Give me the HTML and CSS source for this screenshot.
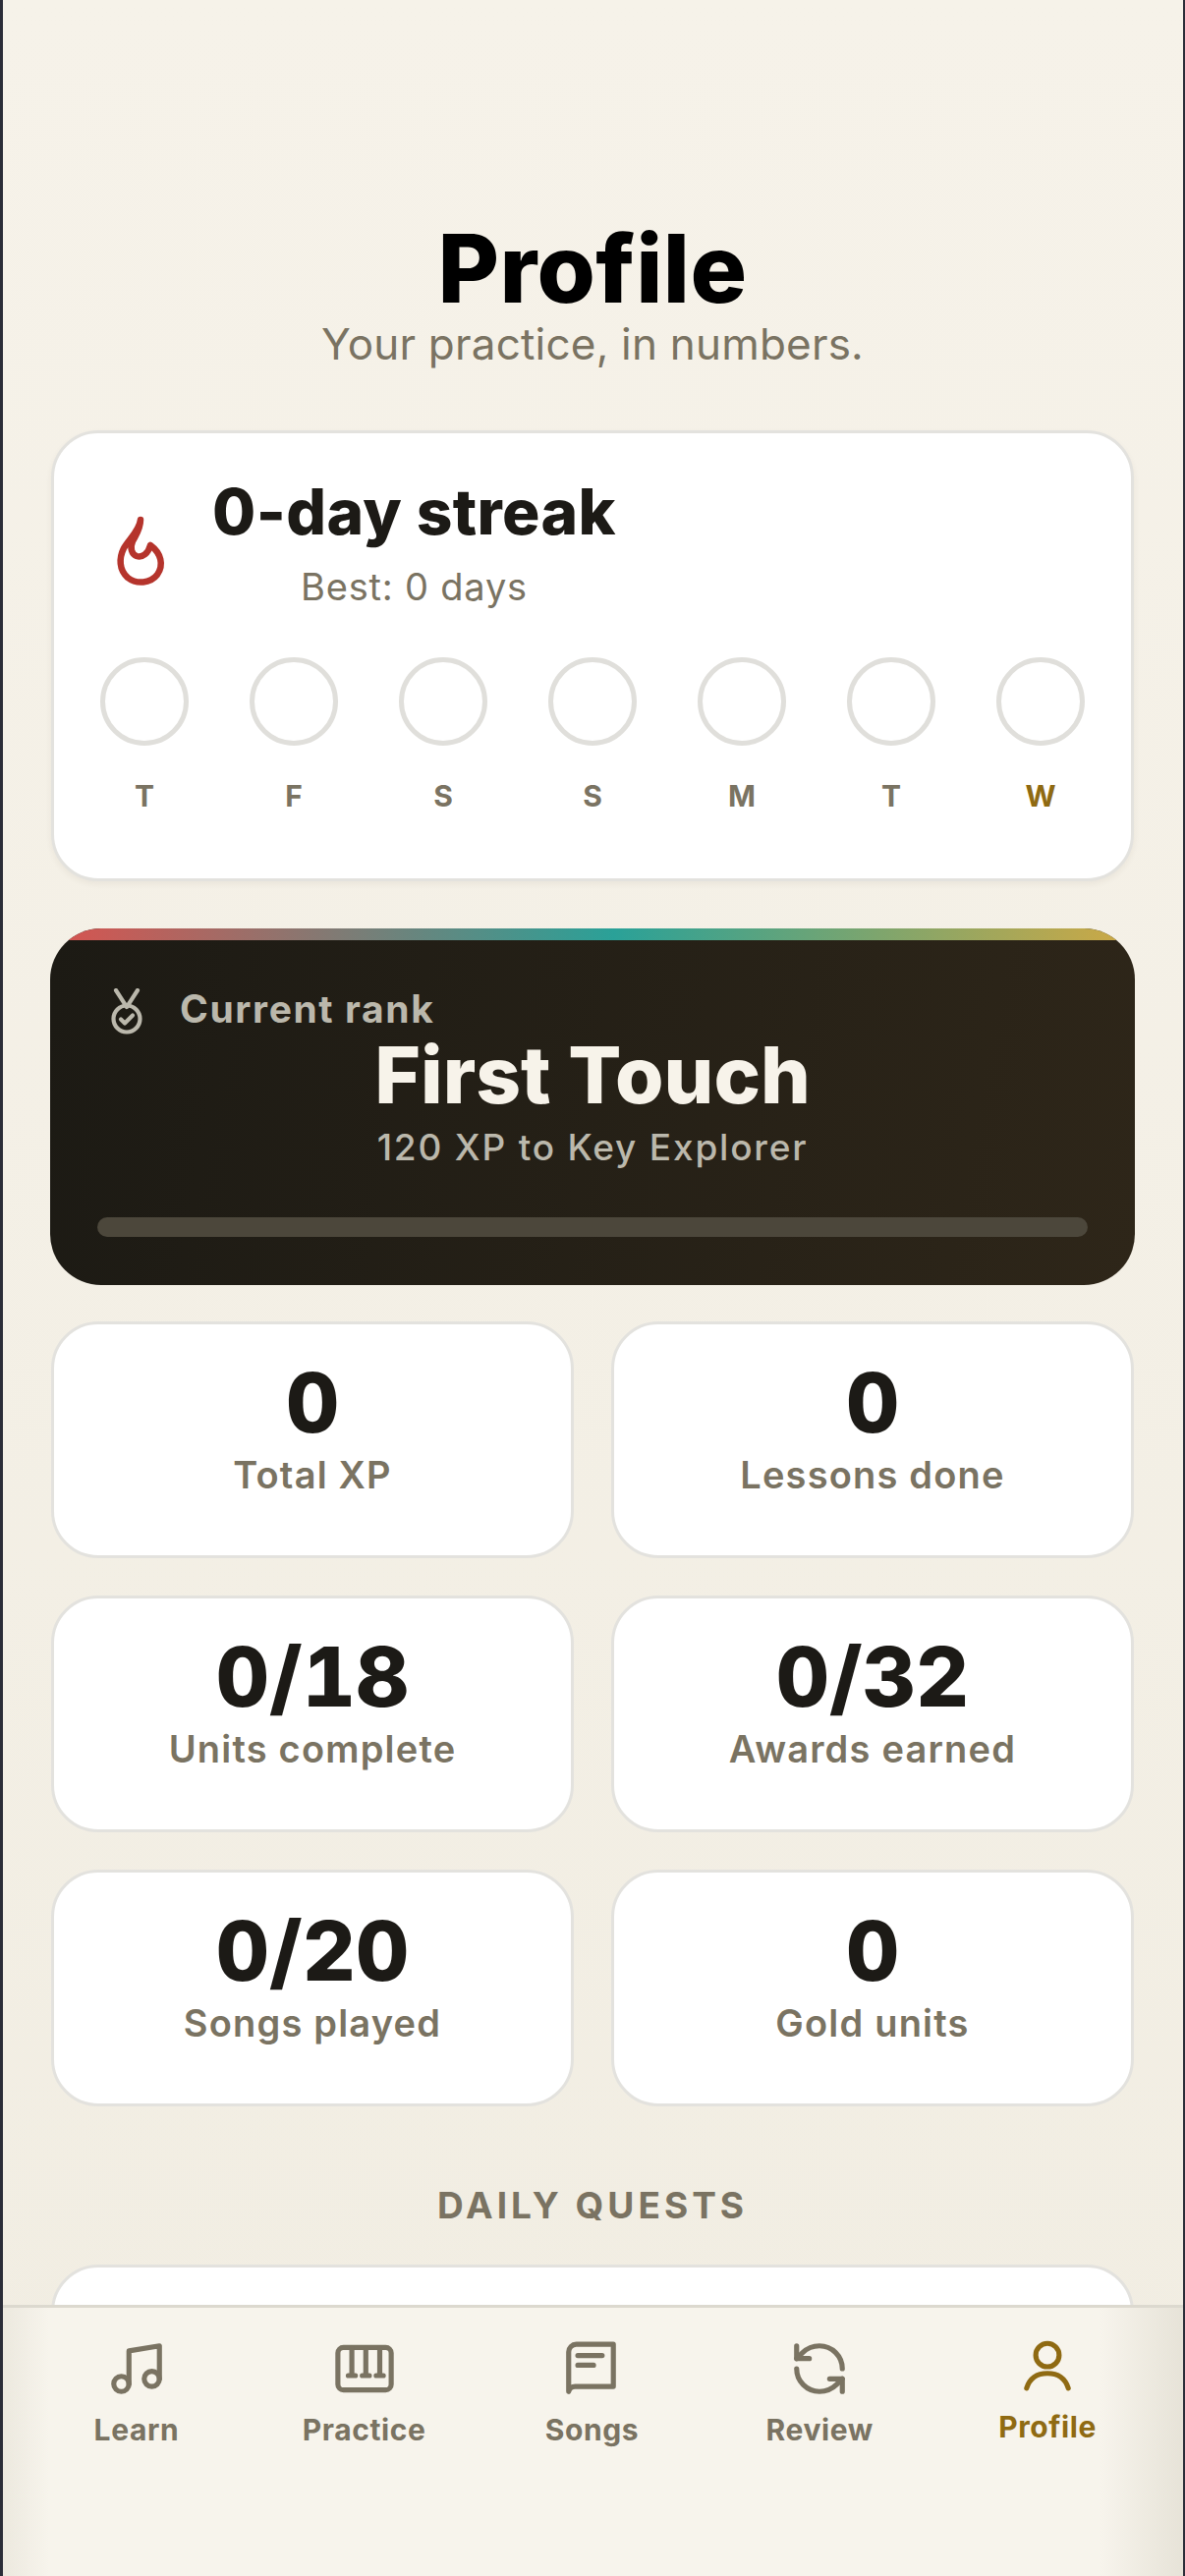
FILE: index.html
```html
<!DOCTYPE html>
<html lang="en">
<head>
  <meta charset="UTF-8">
  <meta name="viewport" content="width=device-width, initial-scale=1.0">
  <title>Profile</title>
  <link rel="stylesheet" href="styles.css">
</head>
<body>
  <div class="screen">
    <div class="content">
      <header class="page-head">
        <h1>Profile</h1>
        <p>Your practice, in numbers.</p>
      </header>

      <section class="card streak">
        <div class="streak-top">
          <svg class="flame" viewBox="114 523 60 80" fill="none" stroke="#b5342c" stroke-width="6.5" stroke-linecap="round" stroke-linejoin="round">
            <path d="M144 531C143 542 132 551 127 560C122 570 122 582 131 590C140 597 154 596 161 587C168 577 165 565 154 557C152 565 146 570 140 568C135 566 133 560 136 553C139 547 144 541 144 531Z"/>
          </svg>
          <div class="streak-text">
            <h2>0-day streak</h2>
            <p>Best: 0 days</p>
          </div>
        </div>
        <div class="week">
          <div class="day"><span class="ring"></span><span class="day-name">T</span></div>
          <div class="day"><span class="ring"></span><span class="day-name">F</span></div>
          <div class="day"><span class="ring"></span><span class="day-name">S</span></div>
          <div class="day"><span class="ring"></span><span class="day-name">S</span></div>
          <div class="day"><span class="ring"></span><span class="day-name">M</span></div>
          <div class="day"><span class="ring"></span><span class="day-name">T</span></div>
          <div class="day today"><span class="ring"></span><span class="day-name">W</span></div>
        </div>
      </section>

      <section class="rank">
        <div class="rank-strip"></div>
        <div class="rank-body">
          <div class="rank-label">
            <svg class="medal" viewBox="0 0 40 52" fill="none" stroke="#bbb8ac" stroke-width="4.2" stroke-linecap="round" stroke-linejoin="round">
              <path d="M9 2L20 19L31 2"/>
              <circle cx="20" cy="31" r="13.5"/>
              <path d="M14 31.5L18 35.5L26 27.5"/>
            </svg>
            <span>Current rank</span>
          </div>
          <h2>First Touch</h2>
          <p>120 XP to Key Explorer</p>
          <div class="rank-bar"></div>
        </div>
      </section>

      <section class="stats">
        <div class="card stat"><strong>0</strong><span>Total XP</span></div>
        <div class="card stat"><strong>0</strong><span>Lessons done</span></div>
        <div class="card stat"><strong>0/18</strong><span>Units complete</span></div>
        <div class="card stat"><strong>0/32</strong><span>Awards earned</span></div>
        <div class="card stat"><strong>0/20</strong><span>Songs played</span></div>
        <div class="card stat"><strong>0</strong><span>Gold units</span></div>
      </section>

      <h3 class="section-title">DAILY QUESTS</h3>
      <section class="card quests"></section>
    </div>

    <nav class="tabbar">
      <a class="tab">
        <svg viewBox="0 0 24 24"><path d="M9 18V5l12-2v13"/><circle cx="6" cy="18" r="3"/><circle cx="18" cy="16" r="3"/></svg>
        <span>Learn</span>
      </a>
      <a class="tab">
        <svg viewBox="0 0 24 24"><rect x="1.5" y="3.6" width="21" height="16.8" rx="2.2"/><path d="M7 4v10.5M12.5 4v10.5M18 4v10.5M5.6 14.7h2.8M11.1 14.7h2.8M16.6 14.7h2.8"/></svg>
        <span>Practice</span>
      </a>
      <a class="tab">
        <svg viewBox="0 0 24 24"><path d="M3 21V5.4a3 3 0 0 1 3-3h14.6V19H5.6A2.6 2.6 0 0 0 3 21z"/><path d="M6.6 6.8h9.6M6.6 10.6h6.2"/></svg>
        <span>Songs</span>
      </a>
      <a class="tab">
        <svg viewBox="0 0 24 24"><path d="M21 12a9 9 0 0 0-9-9 9.75 9.75 0 0 0-6.74 2.74L3 8"/><path d="M3 3v5h5"/><path d="M3 12a9 9 0 0 0 9 9 9.75 9.75 0 0 0 6.74-2.74L21 16"/><path d="M16 16h5v5"/></svg>
        <span>Review</span>
      </a>
      <a class="tab active">
        <svg viewBox="0 0 24 24"><circle cx="12" cy="7.8" r="4.6"/><path d="M3.8 20.8C5 17 8 15 12 15C16 15 19 17 20.2 20.8"/></svg>
        <span>Profile</span>
      </a>
    </nav>
  </div>
</body>
</html>
```

FILE: styles.css
```css
* {
  box-sizing: border-box;
}
html, body {
  margin: 0;
  padding: 0;
  height: 2622px;
  overflow: hidden;
}
body {
  font-family: Inter, "Liberation Sans", sans-serif;
  color: #1c1a16;
  background: #f5f1e8;
}
.screen {
  position: relative;
  width: 1206px;
  height: 2622px;
  overflow: hidden;
  border-left: 3px solid #2b2d38;
  border-right: 2px solid #2b2d38;
  background: linear-gradient(180deg, #f6f2e9 0%, #f1ede2 100%);
}
.content {
  padding: 225px 50px 0 49px;
}
.page-head {
  text-align: center;
  margin-bottom: 62px;
}
.page-head h1 {
  margin: 0 0 3px;
  font-size: 96px;
  line-height: 96px;
  font-weight: 800;
  letter-spacing: 0.4px;
  color: #000;
}
.page-head p {
  margin: 0;
  font-size: 44px;
  line-height: 52px;
  letter-spacing: 0.2px;
  color: #7a7362;
}
.card {
  background: #fff;
  border: 3px solid #e3e2de;
  border-radius: 48px;
}
.streak {
  height: 459px;
  padding: 40px 47px 0 47px;
  box-shadow: 0 3px 6px rgba(60, 50, 30, 0.06);
}
.streak-top {
  display: flex;
  align-items: flex-start;
}
.flame {
  width: 60px;
  height: 80px;
  margin: 40px 0 0 11px;
  flex: none;
}
.streak-text {
  margin-left: 43px;
  text-align: center;
}
.streak-text h2 {
  margin: 0;
  font-size: 64px;
  line-height: 80px;
  font-weight: 800;
  letter-spacing: 0.4px;
  color: #1c1a16;
}
.streak-text p {
  margin: 14px 0 0;
  font-size: 38px;
  line-height: 44px;
  letter-spacing: 0.8px;
  color: #7a7362;
}
.week {
  display: flex;
  justify-content: space-between;
  margin-top: 50px;
}
.day {
  width: 90px;
  display: flex;
  flex-direction: column;
  align-items: center;
}
.ring {
  width: 90px;
  height: 90px;
  border: 5px solid #e0dfdb;
  border-radius: 50%;
}
.day-name {
  margin-top: 32px;
  font-size: 30px;
  line-height: 38px;
  font-weight: 700;
  color: #7a7362;
}
.today .day-name {
  color: #8f6a12;
}
.rank {
  margin: 48px -1px 0 -1px;
  height: 363px;
  border-radius: 52px;
  overflow: hidden;
  background: linear-gradient(100deg, #1c1a14 0%, #2e2619 100%);
}
.rank-strip {
  height: 12px;
  background: linear-gradient(90deg, #d9534f 0%, #2aa198 52%, #cfa944 100%);
}
.rank-body {
  padding: 47px 48px 0;
  text-align: center;
}
.rank-label {
  display: flex;
  align-items: center;
  text-align: left;
  height: 44px;
  font-size: 39px;
  font-weight: 700;
  letter-spacing: 1.6px;
  color: #bbb8ac;
}
.medal {
  width: 40px;
  height: 52px;
  margin: 12px 34px 0 10px;
  flex: none;
}
.rank h2 {
  margin: 0;
  font-size: 80px;
  line-height: 92px;
  font-weight: 800;
  color: #f7f3ea;
}
.rank p {
  margin: 5px 0 0;
  font-size: 37px;
  line-height: 46px;
  font-weight: 500;
  letter-spacing: 1.8px;
  color: #bbb8ac;
}
.rank-bar {
  height: 20px;
  margin-top: 48px;
  border-radius: 10px;
  background: #4c473b;
}
.stats {
  display: grid;
  grid-template-columns: 1fr 1fr;
  gap: 38px;
  margin-top: 37px;
}
.stat {
  height: 241px;
  padding-top: 34px;
  display: flex;
  flex-direction: column;
  align-items: center;
}
.stat strong {
  font-size: 84px;
  line-height: 92px;
  font-weight: 800;
  font-variant-numeric: tabular-nums;
  color: #1c1a16;
}
.stat span {
  margin-top: 3px;
  font-size: 38px;
  line-height: 48px;
  font-weight: 600;
  letter-spacing: 1.2px;
  color: #7a7362;
}
.section-title {
  margin: 78px 0 0;
  text-align: center;
  font-size: 37px;
  line-height: 46px;
  font-weight: 700;
  letter-spacing: 4px;
  color: #7a7362;
}
.quests {
  height: 300px;
  margin-top: 37px;
}
.tabbar {
  position: absolute;
  left: -3px;
  right: -2px;
  bottom: 0;
  height: 276px;
  display: flex;
  padding: 31px 24px 0 23px;
  border-top: 3px solid #dcd9cf;
  background:
    linear-gradient(90deg, rgba(226, 222, 210, 0.55) 0, rgba(226, 222, 210, 0) 50px, rgba(226, 222, 210, 0) 1120px, rgba(226, 222, 210, 0.8) 100%),
    #f7f4ec;
}
.tab {
  flex: 1;
  display: flex;
  flex-direction: column;
  align-items: center;
  color: #7a7362;
}
.tab svg {
  width: 62px;
  height: 62px;
  fill: none;
  stroke: currentColor;
  stroke-width: 2;
  stroke-linecap: round;
  stroke-linejoin: round;
}
.tab span {
  margin-top: 12px;
  font-size: 30px;
  line-height: 38px;
  font-weight: 700;
  letter-spacing: 0.6px;
}
.tab.active {
  color: #8f6a12;
  transform: translateY(-3px);
}
```
